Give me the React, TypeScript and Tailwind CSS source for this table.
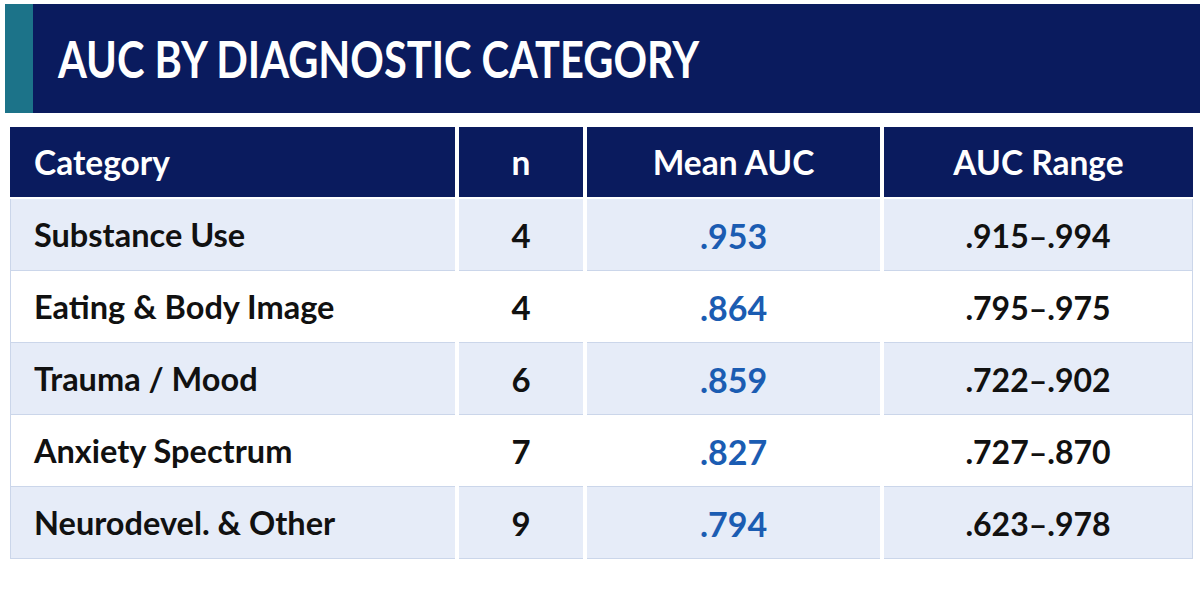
import React from "react";

type Row = {
  category: string;
  n: number;
  mean: string;
  range: string;
};

const rows: Row[] = [
  { category: "Substance Use", n: 4, mean: ".953", range: ".915–.994" },
  { category: "Eating & Body Image", n: 4, mean: ".864", range: ".795–.975" },
  { category: "Trauma / Mood", n: 6, mean: ".859", range: ".722–.902" },
  { category: "Anxiety Spectrum", n: 7, mean: ".827", range: ".727–.870" },
  { category: "Neurodevel. & Other", n: 9, mean: ".794", range: ".623–.978" },
];

const cols = "grid grid-cols-[445px_124px_293px_309px] gap-x-[4px]";

export default function App() {
  return (
    <div className="w-[1200px] h-[590px] bg-white pt-[4px] pl-[5px] font-['Lato','Liberation_Sans',sans-serif] overflow-hidden">
      {/* Title band */}
      <div className="flex h-[109px]">
        <div className="w-[28px] bg-[#1c7389]" />
        <div className="flex-1 bg-[#0a1b5e] flex items-center pl-[25px]">
          <h1 className="text-[51px] font-bold text-white leading-none inline-block origin-left scale-x-[0.815] whitespace-nowrap">
            AUC BY DIAGNOSTIC CATEGORY
          </h1>
        </div>
      </div>

      {/* Table */}
      <div className="mt-[14px] ml-[5px] w-[1183px]">
        <div className={`${cols} h-[70px]`}>
          <div className="bg-[#0a1b5e] text-white font-bold text-[33.5px] flex items-center pl-[24px]">
            Category
          </div>
          <div className="bg-[#0a1b5e] text-white font-bold text-[33.5px] flex items-center justify-center">
            n
          </div>
          <div className="bg-[#0a1b5e] text-white font-bold text-[33.5px] flex items-center justify-center">
            Mean AUC
          </div>
          <div className="bg-[#0a1b5e] text-white font-bold text-[33.5px] flex items-center justify-center">
            AUC Range
          </div>
        </div>

        <div className="mt-[2px]">
          {rows.map((r, i) => {
            const bg = i % 2 === 0 ? "bg-[#e6ecf8]" : "bg-white";
            return (
              <div key={r.category} className={`${cols} h-[72px]`}>
                <div
                  className={`${bg} border-b border-l border-[#cbd6ea] flex items-center pl-[23px] pt-[2px] text-[32.5px] font-bold text-[#111]`}
                >
                  {r.category}
                </div>
                <div
                  className={`${bg} border-b border-[#cbd6ea] flex items-center justify-center pt-[2px] text-[33px] font-bold text-[#111]`}
                >
                  {r.n}
                </div>
                <div
                  className={`${bg} border-b border-[#cbd6ea] flex items-center justify-center pt-[2px] text-[34px] font-bold text-[#1b5cb2]`}
                >
                  {r.mean}
                </div>
                <div
                  className={`${bg} border-b border-r border-[#cbd6ea] flex items-center justify-center pt-[2px] text-[32px] font-bold text-[#111]`}
                >
                  {r.range}
                </div>
              </div>
            );
          })}
        </div>
      </div>
    </div>
  );
}
